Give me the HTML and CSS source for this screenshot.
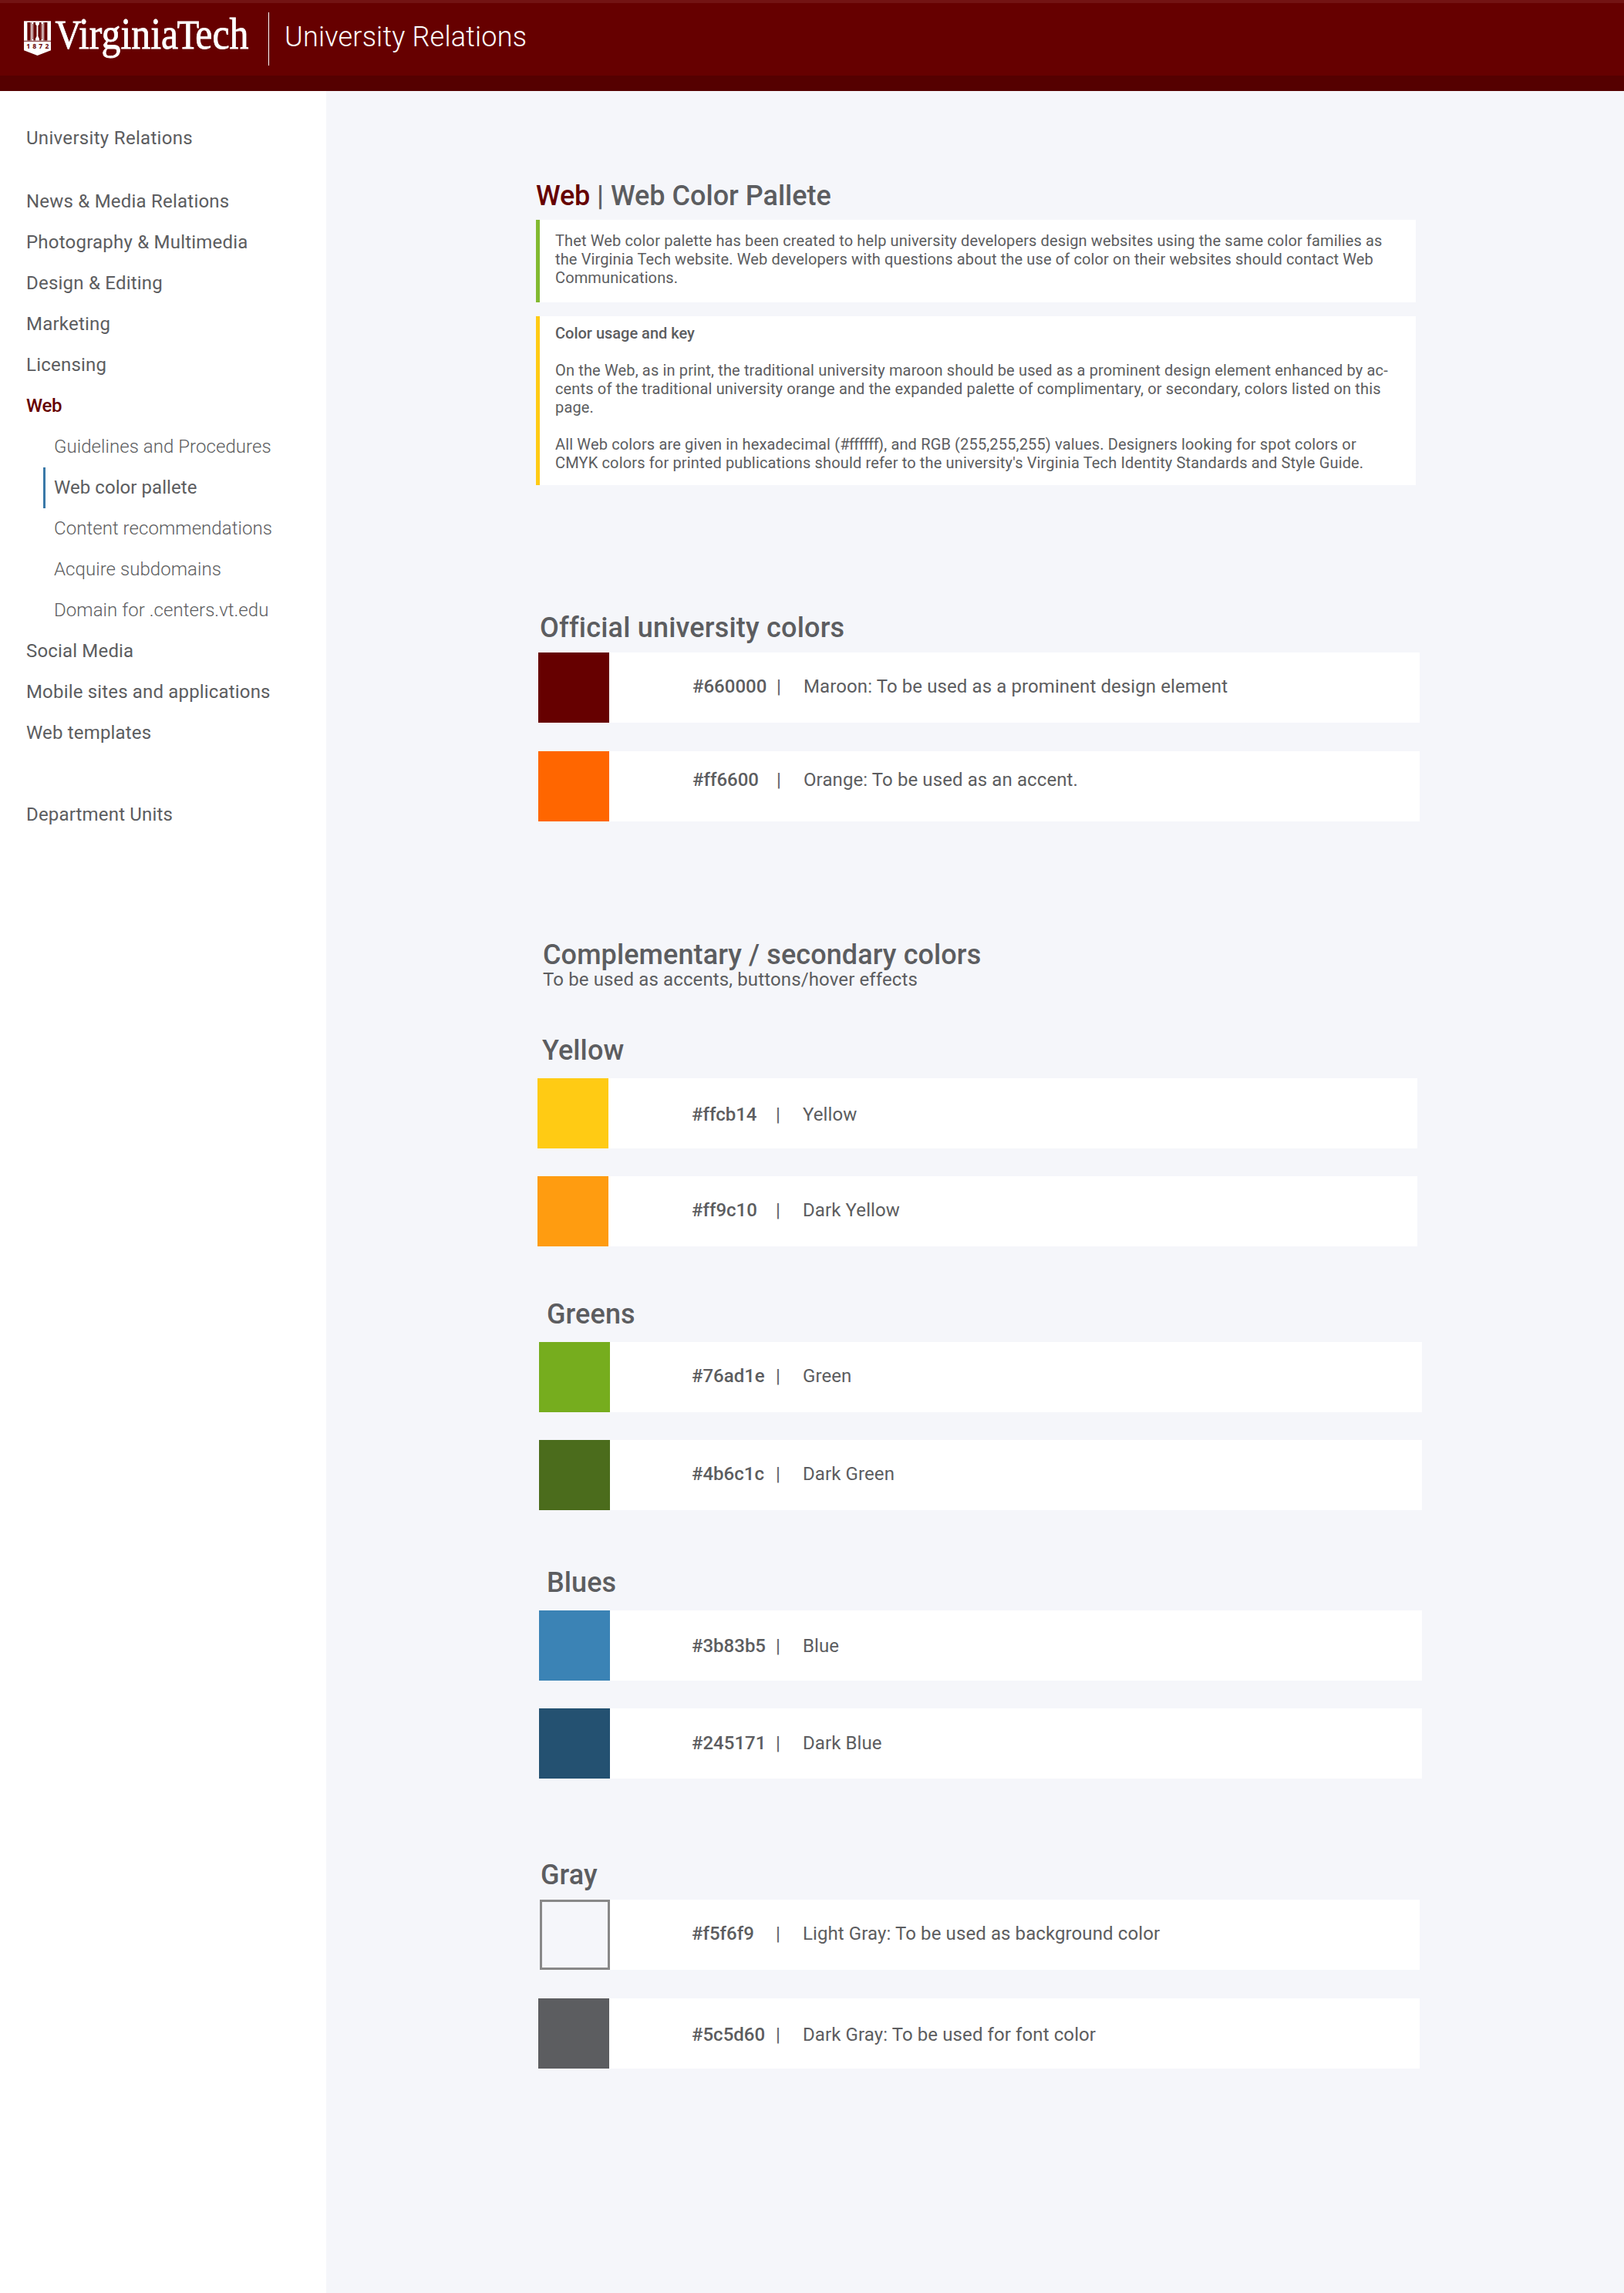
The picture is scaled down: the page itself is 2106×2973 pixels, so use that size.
FILE: index.html
```html
<!DOCTYPE html>
<html lang="en">
<head>
<meta charset="utf-8">
<title>Web Color Pallete | University Relations</title>
<link rel="stylesheet" href="styles.css">
</head>
<body>
<header class="site-header">
  <svg class="logo" viewBox="30 4 300 84" width="300" height="84" role="img" aria-label="Virginia Tech">
    <rect x="31" y="27.3" width="35" height="26" fill="#fff"/>
    <g fill="#660000">
      <rect x="35.4" y="29" width="4.1" height="23.6"/>
      <rect x="57.3" y="29" width="4.1" height="23.6"/>
      <path d="M43.4 29h2.6v2.5l1.5 1.8V47l-1.5 3v2.6h-2.6z"/>
      <path d="M53.5 29h-2.6v2.5l-1.5 1.8V47l1.5 3v2.6h2.6z"/>
    </g>
    <g fill="#8d4a4a">
      <rect x="39.8" y="29" width="1" height="23.6"/>
      <rect x="42" y="31" width="1" height="20"/>
      <rect x="54" y="31" width="1" height="20"/>
      <rect x="56.2" y="29" width="1" height="23.6"/>
      <rect x="31" y="52.7" width="35" height="1.2"/>
    </g>
    <path d="M31 54h35v11.2L48.5 72 31 65.2z" fill="#fff"/>
    <text class="logo-year" x="34.3" y="62.7" textLength="29">1872</text>
    <text class="logo-name" transform="translate(71.5 62.6) scale(.89 1)"><tspan class="cap">V</tspan><tspan dx="-4">irginia</tspan><tspan class="cap" dx="-2">T</tspan><tspan dx="-5.5">ech</tspan></text>
  </svg>
  <div class="header-title">University Relations</div>
</header>
<div class="layout">
  <nav class="sidebar">
    <a class="nav-item nav-root">University Relations</a>
    <a class="nav-item">News &amp; Media Relations</a>
    <a class="nav-item">Photography &amp; Multimedia</a>
    <a class="nav-item">Design &amp; Editing</a>
    <a class="nav-item">Marketing</a>
    <a class="nav-item">Licensing</a>
    <a class="nav-item nav-open">Web</a>
    <div class="subnav">
      <a class="sub-item">Guidelines and Procedures</a>
      <a class="sub-item sub-current">Web color pallete</a>
      <a class="sub-item">Content recommendations</a>
      <a class="sub-item">Acquire subdomains</a>
      <a class="sub-item">Domain for .centers.vt.edu</a>
    </div>
    <a class="nav-item nav-lower">Social Media</a>
    <a class="nav-item nav-lower">Mobile sites and applications</a>
    <a class="nav-item nav-lower">Web templates</a>
    <a class="nav-item nav-lower nav-units">Department Units</a>
  </nav>
  <main class="content">
    <section class="intro">
      <h1 class="page-title"><span class="crumb">Web</span> | Web Color Pallete</h1>
      <div class="note note-green">
        <p>Thet Web color palette has been created to help university developers design websites using the same color families as<br>the Virginia Tech website. Web developers with questions about the use of color on their websites should contact Web<br>Communications.</p>
      </div>
      <div class="note note-yellow">
        <h2 class="note-title">Color usage and key</h2>
        <p>On the Web, as in print, the traditional university maroon should be used as a prominent design element enhanced by ac-<br>cents of the traditional university orange and the expanded palette of complimentary, or secondary, colors listed on this<br>page.</p>
        <p>All Web colors are given in hexadecimal (<span class="code">#ffffff</span>), and RGB (255,255,255) values. Designers looking for spot colors or<br>CMYK colors for printed publications should refer to the university's Virginia Tech Identity Standards and Style Guide.</p>
      </div>
    </section>

    <section class="group official">
      <h2 class="heading">Official university colors</h2>
      <div class="row"><span class="swatch maroon"></span><div class="row-body"><b class="hex">#660000</b><span class="bar">|</span><span>Maroon: To be used as a prominent design element</span></div></div>
      <div class="row raised"><span class="swatch orange"></span><div class="row-body"><b class="hex">#ff6600</b><span class="bar">|</span><span>Orange: To be used as an accent.</span></div></div>
    </section>

    <section class="secondary">
      <h2 class="heading">Complementary / secondary colors</h2>
      <p class="subheading">To be used as accents, buttons/hover effects</p>
    </section>

    <section class="group yellows">
      <h2 class="heading">Yellow</h2>
      <div class="row lowered"><span class="swatch yellow"></span><div class="row-body"><b class="hex">#ffcb14</b><span class="bar">|</span><span>Yellow</span></div></div>
      <div class="row"><span class="swatch dark-yellow"></span><div class="row-body"><b class="hex">#ff9c10</b><span class="bar">|</span><span>Dark Yellow</span></div></div>
    </section>

    <section class="group greens">
      <h2 class="heading">Greens</h2>
      <div class="row"><span class="swatch green"></span><div class="row-body"><b class="hex">#76ad1e</b><span class="bar">|</span><span>Green</span></div></div>
      <div class="row"><span class="swatch dark-green"></span><div class="row-body"><b class="hex">#4b6c1c</b><span class="bar">|</span><span>Dark Green</span></div></div>
    </section>

    <section class="group blues">
      <h2 class="heading">Blues</h2>
      <div class="row lowered-slightly"><span class="swatch blue"></span><div class="row-body"><b class="hex">#3b83b5</b><span class="bar">|</span><span>Blue</span></div></div>
      <div class="row"><span class="swatch dark-blue"></span><div class="row-body"><b class="hex">#245171</b><span class="bar">|</span><span>Dark Blue</span></div></div>
    </section>

    <section class="group grays">
      <h2 class="heading">Gray</h2>
      <div class="row"><span class="swatch light-gray"></span><div class="row-body"><b class="hex">#f5f6f9</b><span class="bar">|</span><span>Light Gray: To be used as background color</span></div></div>
      <div class="row lowered"><span class="swatch dark-gray"></span><div class="row-body"><b class="hex">#5c5d60</b><span class="bar">|</span><span>Dark Gray: To be used for font color</span></div></div>
    </section>
  </main>
</div>
</body>
</html>
```
FILE: styles.css
```css
* { box-sizing: border-box; }
body {
  margin: 0;
  font-family: Roboto, "Liberation Sans", sans-serif;
  font-size: 24px;
  line-height: 28px;
  color: #5c5d60;
  background: #f5f6fa;
}
h1, h2, p { margin: 0; }

/* Header */
.site-header {
  display: flex;
  align-items: flex-start;
  height: 118px;
  padding-left: 30px;
  background: #660000;
  border-top: 4px solid #731313;
  border-bottom: 20px solid #550000;
}
.logo { display: block; }
.logo-name { font: 56px "Liberation Serif", serif; fill: #fff; stroke: #fff; stroke-width: 0.8; }
.logo-name .cap { font-size: 53px; }
.logo-year { font: bold 8.6px "Open Sans", "Liberation Sans", sans-serif; fill: #660000; }
.header-title {
  height: 69px;
  margin: 12px 0 0 18px;
  padding: 11px 0 0 20px;
  border-left: 1px solid #fff;
  color: #fff;
  font-size: 36px;
  line-height: 42px;
  font-weight: 300;
  letter-spacing: 0.21px;
}

/* Columns */
.layout { display: flex; min-height: 2855px; }
.sidebar { width: 423px; padding-top: 35px; background: #fff; }
.content { flex: 1; }

/* Navigation */
.nav-item {
  display: block;
  padding-left: 34px;
  line-height: 53px;
  letter-spacing: 0.22px;
}
.nav-root { margin-bottom: 29px; letter-spacing: 0.31px; }
.nav-open { color: #660000; font-weight: 500; letter-spacing: -0.3px; }
.nav-lower { letter-spacing: 0.17px; }
.nav-units { margin-top: 53px; }
.sub-item {
  display: block;
  margin-left: 56px;
  padding-left: 14px;
  line-height: 53px;
  font-weight: 300;
  letter-spacing: 0.06px;
}
.sub-current {
  padding-left: 11px;
  border-left: 3px solid #3a79a8;
  font-weight: 400;
}

/* Introduction */
.intro { width: 1141px; margin: 118px 0 0 272px; }
.page-title, .heading { font-size: 36px; line-height: 36px; font-weight: 500; }
.page-title { margin-bottom: 13px; }
.crumb { color: #660000; letter-spacing: -0.2px; }
.note {
  height: 107px;
  padding: 15px 0 0 20px;
  border-left: 5px solid #82b930;
  background: #fff;
  font-size: 20px;
  line-height: 24px;
  letter-spacing: 0.13px;
  white-space: nowrap;
}
.note-yellow { height: 219px; margin-top: 18px; padding-top: 10px; border-color: #ffcb14; letter-spacing: 0.15px; }
.note-title { font-size: 20px; line-height: 24px; font-weight: 500; letter-spacing: 0; }
.note-yellow p { margin-top: 24px; }
.code { letter-spacing: -0.6px; }

/* Colour groups */
.group { width: 1143px; margin-left: 275px; }
.heading { padding-left: 6px; letter-spacing: 0.1px; }
.row { display: flex; height: 91px; margin-top: 36px; }
.heading + .row { margin-top: 18px; }
.swatch { width: 92px; }
.row-body {
  display: flex;
  flex: 1;
  padding: 30px 0 0 107px;
  background: #fff;
  letter-spacing: 0.1px;
}
.hex { width: 109px; font-weight: 500; letter-spacing: 0; }
.bar { width: 35px; }
.raised .row-body { padding-top: 23px; }
.lowered .row-body { padding-top: 33px; }
.lowered-slightly .row-body { padding-top: 32px; }

.official { margin-top: 167px; }
.official .heading { padding-left: 2px; letter-spacing: 0.2px; }
.official .heading + .row, .grays .heading + .row { margin-top: 14px; }
.official .row, .grays .row { margin-top: 37px; }
.official .row-body { padding-left: 108px; }

.secondary { margin: 155px 0 0 274px; }
.subheading { padding-left: 7px; letter-spacing: 0.13px; }
.secondary .heading { padding-left: 7px; }

.yellows { width: 1141px; margin: 60px 0 0 274px; }
.yellows .row-body { padding-left: 108px; }
.greens, .blues { width: 1145px; margin-left: 276px; }
.greens { margin-top: 70px; }
.blues { margin-top: 76px; }
.greens .row-body, .blues .row-body { padding-left: 106px; }
.greens .heading, .blues .heading { padding-left: 10px; }
.blues .row:last-child .row-body { padding-top: 31px; }
.grays { margin-top: 107px; }
.grays .heading { padding-left: 3px; }

.maroon { background: #660000; }
.orange { background: #ff6600; }
.yellow { background: #ffcb14; }
.dark-yellow { background: #ff9c10; }
.green { background: #76ad1e; }
.dark-green { background: #4b6c1c; }
.blue { background: #3b83b5; }
.dark-blue { background: #245171; }
.dark-gray { background: #5c5d60; }
.light-gray { width: 91px; margin-left: 2px; border: 3px solid #888; }
.light-gray + .row-body { padding-left: 106px; }
```
